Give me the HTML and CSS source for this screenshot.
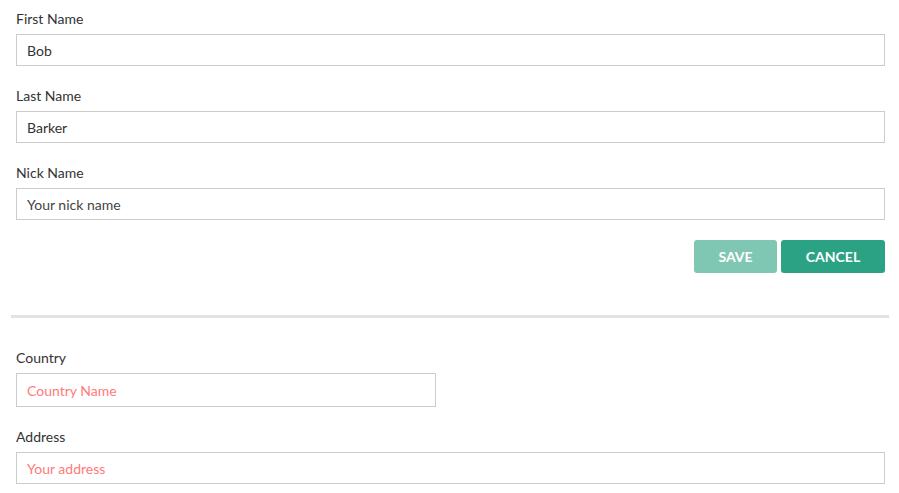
FILE: index.html
```html
<!DOCTYPE html>
<html>
<head>
<meta charset="utf-8">
<link rel="stylesheet" href="styles.css">
</head>
<body>
<div class="page">
  <form class="form">
    <div class="group">
      <label class="label">First Name</label>
      <input class="input" type="text" value="Bob">
    </div>
    <div class="group">
      <label class="label">Last Name</label>
      <input class="input" type="text" value="Barker">
    </div>
    <div class="group">
      <label class="label">Nick Name</label>
      <input class="input nick" type="text" placeholder="Your nick name">
    </div>
    <div class="actions">
      <button type="button" class="btn btn-save">SAVE</button>
      <button type="button" class="btn btn-cancel">CANCEL</button>
    </div>
  </form>
  <hr class="divider">
  <form class="form form2">
    <div class="group">
      <label class="label">Country</label>
      <input class="input input-country error" type="text" placeholder="Country Name">
    </div>
    <div class="group">
      <label class="label">Address</label>
      <input class="input error" type="text" placeholder="Your address">
    </div>
  </form>
</div>
</body>
</html>
```
FILE: styles.css
```css
* { box-sizing: border-box; }
html, body { margin: 0; padding: 0; background: #fff; }
body {
  font-family: Lato, "Open Sans", sans-serif;
  font-size: 14px;
  color: #333;
}
.page { padding-top: 9px; }
.form { margin: 0 14px 0 16px; }
.group { display: flex; flex-direction: column; margin-bottom: 20px; }
.label {
  display: block;
  line-height: 20px;
  height: 20px;
  margin-bottom: 5px;
  color: #333;
}
.input {
  display: block;
  width: 100%;
  height: 32px;
  border: 1px solid #cccccc;
  border-radius: 0;
  padding: 0 10px;
  font-family: Lato, "Open Sans", sans-serif;
  font-size: 14px;
  color: #333;
  background: #fff;
  outline: none;
}
.input.nick::placeholder { color: #444; opacity: 1; }
.input.error::placeholder { color: #ff7a7a; opacity: 1; }
.input-country { width: 420px; height: 34px; }
.actions {
  display: flex;
  justify-content: flex-end;
  gap: 4px;
}
.btn {
  height: 33px;
  padding: 0 24px;
  border: none;
  border-radius: 3px;
  font-family: Lato, "Open Sans", sans-serif;
  font-weight: 700;
  font-size: 14px;
  color: #fff;
  cursor: pointer;
}
.btn-save { background: #80c7b3; width: 83px; }
.btn-cancel { background: #2ba283; width: 104px; }
.divider {
  margin: 42px 10px 0 11px;
  border: none;
  height: 3px;
  background: #e1e3e5;
}
.form2 { padding-top: 30px; }
```
